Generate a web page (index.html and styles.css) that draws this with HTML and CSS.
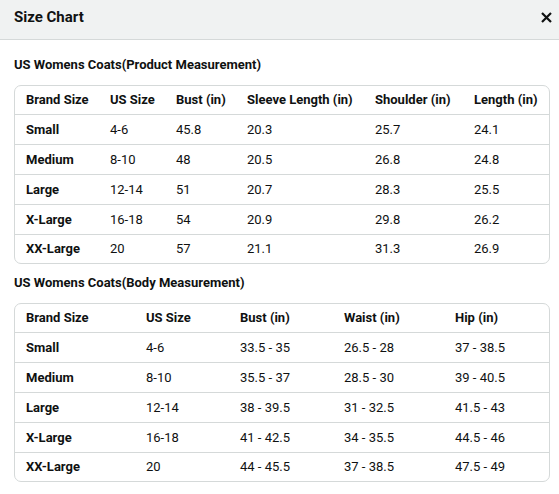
FILE: index.html
```html
<!DOCTYPE html>
<html>
<head>
<meta charset="utf-8">
<title>Size Chart</title>
<link rel="stylesheet" href="styles.css">
</head>
<body>

<div class="popover">

<div class="pophead">
  <strong>Size Chart</strong>
  <a class="close" href="#"><svg width="11" height="11" viewBox="0 0 11 11"><path d="M1 1L10 10M10 1L1 10" stroke="#0f1111" stroke-width="2.2"/></svg></a>
</div>

<div class="popbody">

  <h4>US Womens Coats(Product Measurement)</h4>
  <div class="tbox">
  <table class="tb1">
    <tr><th>Brand Size</th><th>US Size</th><th>Bust (in)</th><th>Sleeve Length (in)</th><th>Shoulder (in)</th><th>Length (in)</th></tr>
    <tr><th>Small</th><td>4-6</td><td>45.8</td><td>20.3</td><td>25.7</td><td>24.1</td></tr>
    <tr><th>Medium</th><td>8-10</td><td>48</td><td>20.5</td><td>26.8</td><td>24.8</td></tr>
    <tr><th>Large</th><td>12-14</td><td>51</td><td>20.7</td><td>28.3</td><td>25.5</td></tr>
    <tr><th>X-Large</th><td>16-18</td><td>54</td><td>20.9</td><td>29.8</td><td>26.2</td></tr>
    <tr><th>XX-Large</th><td>20</td><td>57</td><td>21.1</td><td>31.3</td><td>26.9</td></tr>
  </table>
  </div>

  <h4>US Womens Coats(Body Measurement)</h4>
  <div class="tbox">
  <table class="tb2">
    <tr><th>Brand Size</th><th>US Size</th><th>Bust (in)</th><th>Waist (in)</th><th>Hip (in)</th></tr>
    <tr><th>Small</th><td>4-6</td><td>33.5 - 35</td><td>26.5 - 28</td><td>37 - 38.5</td></tr>
    <tr><th>Medium</th><td>8-10</td><td>35.5 - 37</td><td>28.5 - 30</td><td>39 - 40.5</td></tr>
    <tr><th>Large</th><td>12-14</td><td>38 - 39.5</td><td>31 - 32.5</td><td>41.5 - 43</td></tr>
    <tr><th>X-Large</th><td>16-18</td><td>41 - 42.5</td><td>34 - 35.5</td><td>44.5 - 46</td></tr>
    <tr><th>XX-Large</th><td>20</td><td>44 - 45.5</td><td>37 - 38.5</td><td>47.5 - 49</td></tr>
  </table>
  </div>

</div>

</div>

</body>
</html>
```

FILE: styles.css
```css
body { margin:0; background:#fff; color:#0f1111; font-family:Roboto, "Liberation Sans", Arial, sans-serif; font-size:13px; }
.pophead { height:40px; background:#f0f2f2; border-bottom:1px solid #d5d9d9; display:flex; align-items:center; justify-content:space-between; padding:0 7px 0 14px; box-sizing:border-box; }
.pophead strong { font-size:15px; font-weight:700; margin-top:-5px; }
.pophead a.close { display:flex; margin-top:-4px; }
.popbody { padding:16px 9px 0 14px; }
h4 { font-size:13px; font-weight:700; margin:0 0 11px 0; line-height:18px; }
.tbox { border:1px solid #d5d9d9; border-radius:7px; overflow:hidden; margin-bottom:10px; }
table { width:100%; border-collapse:collapse; table-layout:fixed; }
th, td { text-align:left; padding:0 0 0 11px; height:30px; white-space:nowrap; box-sizing:border-box; }
th { font-weight:700; }
td { font-weight:400; }
tr + tr th, tr + tr td { border-top:1px solid #d5d9d9; height:30px; }
tr:first-child th { height:28px; }
tr:last-child th, tr:last-child td { height:29px; }
.tb1 th:nth-child(1) { width:84px; }
.tb1 th:nth-child(2) { width:66px; }
.tb1 th:nth-child(3) { width:71px; }
.tb1 th:nth-child(4) { width:128px; }
.tb1 th:nth-child(5) { width:99px; }
.tb2 th:nth-child(1) { width:120px; }
.tb2 th:nth-child(2) { width:94px; }
.tb2 th:nth-child(3) { width:104px; }
.tb2 th:nth-child(4) { width:111px; }
```
